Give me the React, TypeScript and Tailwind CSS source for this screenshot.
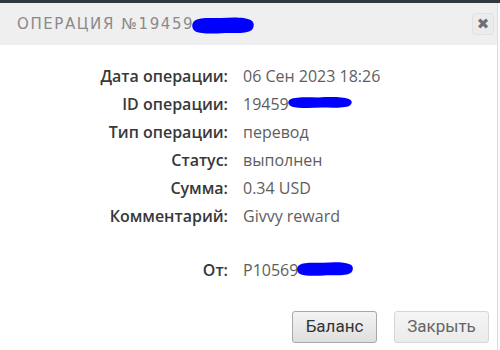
import React from "react";

type Row = { label: string; value: string; blob?: boolean };

const rows: Row[] = [
  { label: "Дата операции:", value: "06 Сен 2023 18:26" },
  { label: "ID операции:", value: "19459", blob: true },
  { label: "Тип операции:", value: "перевод" },
  { label: "Статус:", value: "выполнен" },
  { label: "Сумма:", value: "0.34 USD" },
  { label: "Комментарий:", value: "Givvy reward" },
];

// blue marker scribble that hides part of the number
const Blob = ({ w, h, className }: { w: number; h: number; className?: string }) => (
  <svg width={w} height={h} viewBox="0 0 64 18" preserveAspectRatio="none" className={className}>
    <path
      d="M3 5 C8 1 20 2 30 2 C42 1 54 1 60 4 C64 6 63 11 61 13 C56 17 44 16 34 16 C22 17 10 17 5 15 C1 13 0 8 3 5 Z"
      fill="#0000ff"
    />
  </svg>
);

export default function App() {
  return (
    <div className="h-[350px] w-[500px] overflow-hidden bg-white" style={{ fontFamily: "'Open Sans', 'DejaVu Sans', sans-serif" }}>
      <div className="h-[3px] bg-[#2f393e]" />
      <div className="flex h-[347px] w-[498px] flex-col border-r border-[#dcdcdc]">
        <div className="flex h-[42px] items-center justify-between bg-[#efefef] pl-[17px] pr-[3px]">
          <div className="flex items-center">
            <span
              className="text-[15px] uppercase tracking-[1.6px] text-[#8a8a8a]"
              style={{ fontFamily: "'DejaVu Sans', sans-serif" }}
            >
              Операция №19459
            </span>
            <Blob w={64} h={19} className="-ml-[3px] mt-[2px]" />
          </div>
          <button
            type="button"
            className="flex h-[22px] w-[22px] items-center justify-center rounded-[3px] border border-[#e2e2e2] bg-[#ececec] text-[15px] font-bold leading-none text-[#707070]"
            style={{ fontFamily: "'DejaVu Sans', sans-serif" }}
          >
            ✖
          </button>
        </div>

        <div className="grid grid-cols-[228px_1fr] gap-x-[15px] pt-[17px] text-[16px]">
          {rows.map((r) => (
            <React.Fragment key={r.label}>
              <div className="flex h-[28px] items-center justify-end font-semibold text-[#383838]">{r.label}</div>
              <div className="flex h-[28px] items-center text-[#5e5e5e]">
                {r.value}
                {r.blob && <Blob w={66} h={13} className="-ml-[2px] -mt-[3px]" />}
              </div>
            </React.Fragment>
          ))}
          <div className="mt-[26px] flex h-[28px] items-center justify-end font-semibold text-[#383838]">От:</div>
          <div className="mt-[26px] flex h-[28px] items-center text-[#5e5e5e]">
            P10569
            <Blob w={58} h={16} className="-ml-[2px] -mt-[2px]" />
          </div>
        </div>

        <div className="mt-[27px] flex justify-end gap-[17px] pr-[8px]" style={{ fontFamily: "Roboto, sans-serif" }}>
          <button
            type="button"
            className="h-[32px] w-[85px] rounded-[3px] border border-[#a8a8a8] bg-gradient-to-b from-[#f3f3f3] to-[#dfdfdf] text-[17px] text-[#333]"
          >
            Баланс
          </button>
          <button
            type="button"
            className="h-[32px] w-[95px] rounded-[3px] border border-[#d6d6d6] bg-gradient-to-b from-[#f5f5f5] to-[#ebebeb] text-[17px] text-[#666]"
          >
            Закрыть
          </button>
        </div>
      </div>
    </div>
  );
}
